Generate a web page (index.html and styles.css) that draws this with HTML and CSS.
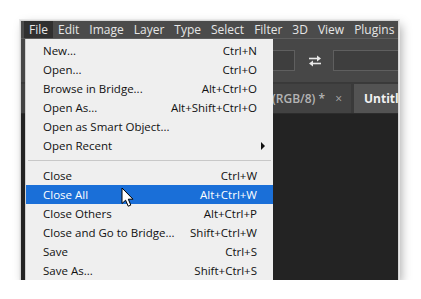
FILE: index.html
```html
<!DOCTYPE html>
<html>
<head>
<meta charset="utf-8">
<link rel="stylesheet" href="styles.css">
</head>
<body>
<div class="window">
  <div class="menubar">
    <span class="mitem active">File</span>
    <span class="mitem">Edit</span>
    <span class="mitem">Image</span>
    <span class="mitem">Layer</span>
    <span class="mitem">Type</span>
    <span class="mitem">Select</span>
    <span class="mitem">Filter</span>
    <span class="mitem">3D</span>
    <span class="mitem">View</span>
    <span class="mitem">Plugins</span>
  </div>
  <div class="main">
    <div class="toolbar">
      <div class="field f1"></div>
      <svg class="swap" width="14" height="12" viewBox="0 0 14 12">
        <path d="M1 3.5 H10" stroke="#e8e8e8" stroke-width="1.6"/>
        <path d="M9 0.5 L13 3.5 L9 6.5 Z" fill="#e8e8e8"/>
        <path d="M13 8.5 H4" stroke="#e8e8e8" stroke-width="1.6"/>
        <path d="M5 5.5 L1 8.5 L5 11.5 Z" fill="#e8e8e8"/>
      </svg>
      <div class="field f2"></div>
    </div>
    <div class="tabs">
      <div class="tab tab1"><span class="tabtext">Untitled-1 @ 66.7% (RGB/8) *</span><span class="close">×</span></div>
      <div class="tab tab2"><span class="tabtext">Untitled-2</span></div>
    </div>
    <div class="canvas"></div>
  </div>
  <div class="menu">
    <div class="row"><span>New...</span><span>Ctrl+N</span></div>
    <div class="row"><span>Open...</span><span>Ctrl+O</span></div>
    <div class="row"><span>Browse in Bridge...</span><span>Alt+Ctrl+O</span></div>
    <div class="row"><span>Open As...</span><span>Alt+Shift+Ctrl+O</span></div>
    <div class="row"><span>Open as Smart Object...</span><span></span></div>
    <div class="row"><span>Open Recent</span><span class="arrow"></span></div>
    <div class="sep"></div>
    <div class="row"><span>Close</span><span>Ctrl+W</span></div>
    <div class="row hl"><span>Close All</span><span>Alt+Ctrl+W</span></div>
    <div class="row"><span>Close Others</span><span>Alt+Ctrl+P</span></div>
    <div class="row"><span>Close and Go to Bridge...</span><span>Shift+Ctrl+W</span></div>
    <div class="row"><span>Save</span><span>Ctrl+S</span></div>
    <div class="row"><span>Save As...</span><span>Shift+Ctrl+S</span></div>
  </div>
  <svg class="cursor" width="14" height="21" viewBox="0 0 14 21">
    <path d="M1 1 L1 16.5 L4.6 13.2 L7.2 19.2 L9.8 18.1 L7.3 12.2 L12 12.2 Z" fill="#fff" stroke="#000" stroke-width="1" stroke-linejoin="round"/>
  </svg>
</div>
</body>
</html>
```
FILE: styles.css
```css
html, body {
  margin: 0;
  background: #ffffff;
}
body {
  padding: 21px 0 0 21px;
  font-family: "Open Sans", "Noto Sans", sans-serif;
}
.window {
  position: relative;
  width: 377px;
  height: 259px;
  display: flex;
  flex-direction: column;
  background: #3c3c3c;
  box-shadow: 0 0 0 1px #d6d6d6, 0 0 0 2px #e8e8e8, 3px 4px 10px rgba(0,0,0,0.35);
}
.menubar {
  height: 17px;
  background: #4b4b4b;
  display: flex;
  align-items: center;
  padding-left: 3px;
  border-bottom: 1px solid #5e5e5e;
}
.mitem {
  color: #e6e6e6;
  font-size: 12px;
  line-height: 17px;
  padding: 0 5px;
  white-space: nowrap;
}
.mitem.active {
  background: #303030;
}
.main {
  flex: 1;
  display: flex;
  flex-direction: column;
  overflow: hidden;
}
.toolbar {
  height: 43px;
  background: #474747;
  display: flex;
  align-items: center;
  border-bottom: 1px solid #393939;
}
.field {
  flex: none;
  height: 19px;
  background: #3e3e3e;
  border: 1px solid #5f5f5f;
}
.f1 {
  width: 262px;
  margin-left: 10px;
}
.swap {
  flex: none;
  margin-left: 13px;
  margin-right: 11px;
}
.f2 {
  width: 80px;
}
.tabs {
  height: 29px;
  display: flex;
  align-items: stretch;
  background: #3a3a3a;
  padding-top: 1px;
  gap: 3px;
  border-bottom: 1px solid #2c2c2c;
}
.tab {
  display: flex;
  align-items: center;
  white-space: nowrap;
  overflow: hidden;
  font-size: 12px;
}
.tab1 {
  width: 330px;
  flex: none;
  justify-content: flex-end;
  background: #424242;
  color: #b4b4b4;
}
.tab1 .tabtext {
  font-weight: 600;
}
.close {
  margin-left: 10px;
  margin-right: 9px;
  font-size: 12px;
  color: #a8a8a8;
}
.tab2 {
  flex: 1;
  background: #535353;
  color: #f2f2f2;
  padding-left: 10px;
}
.tab2 .tabtext {
  font-weight: 700;
}
.canvas {
  flex: 1;
  background: #232323;
}
.menu {
  position: absolute;
  left: 4px;
  top: 18px;
  width: 248px;
  bottom: 0;
  background: #efefef;
  border-left: 1px solid #d0d0d0;
  padding-top: 2px;
  box-sizing: border-box;
}
.row {
  height: 19px;
  display: flex;
  justify-content: space-between;
  align-items: center;
  padding: 0 16px 0 17px;
  font-size: 11.5px;
  color: #111;
  white-space: nowrap;
}
.row.hl {
  background: #1a6fd8;
  color: #ffffff;
}
.sep {
  height: 1px;
  background: #c8c8c8;
  margin: 5px 2px 5px 2px;
}
.arrow {
  width: 0;
  height: 0;
  border-top: 4px solid transparent;
  border-bottom: 4px solid transparent;
  border-left: 4px solid #111;
  margin-right: -8px;
}
.cursor {
  position: absolute;
  left: 100px;
  top: 166px;
}
```
